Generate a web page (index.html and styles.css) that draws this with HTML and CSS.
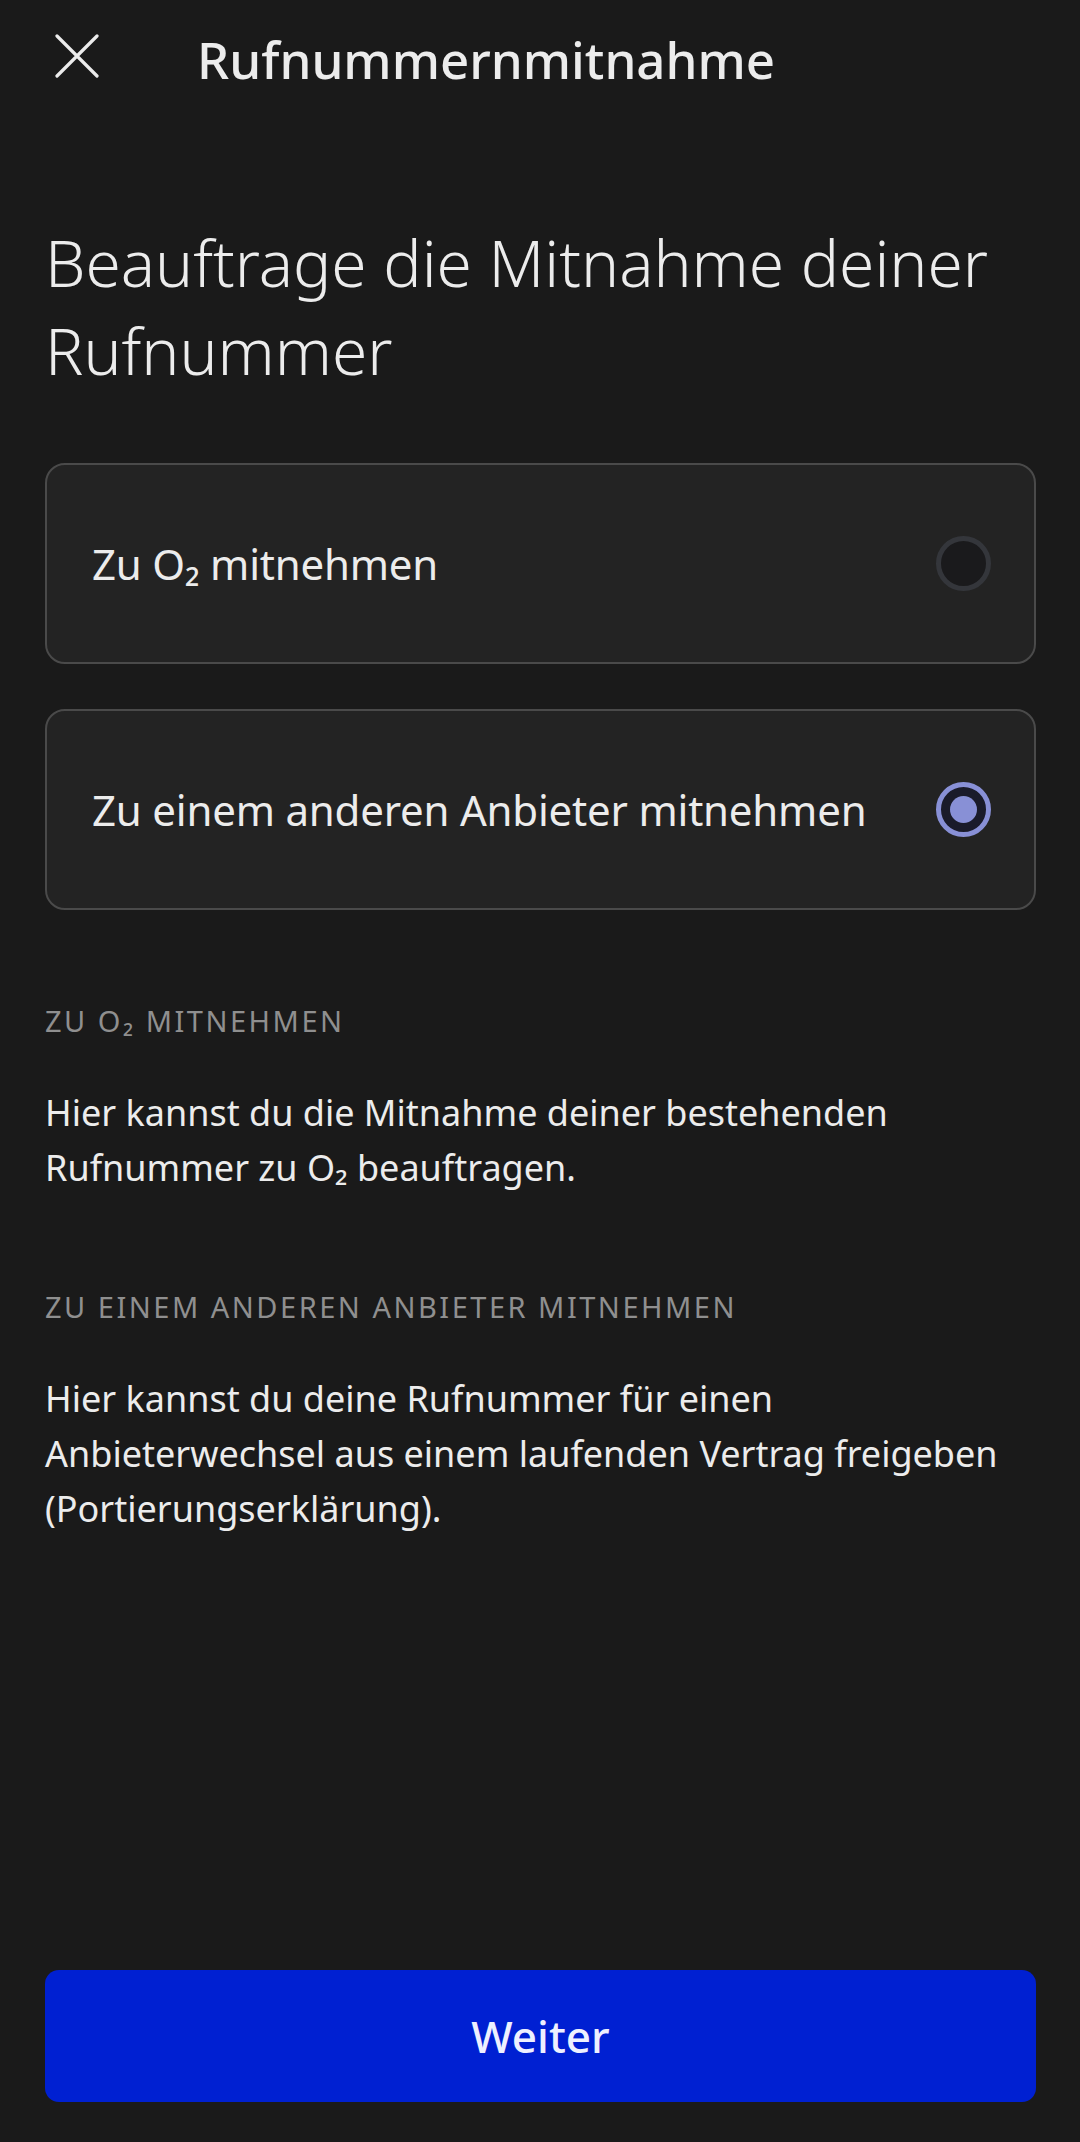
FILE: index.html
```html
<!DOCTYPE html>
<html lang="de">
<head>
  <meta charset="UTF-8">
  <meta name="viewport" content="width=device-width, initial-scale=1.0">
  <title>Rufnummernmitnahme</title>
  <link rel="stylesheet" href="styles.css">
</head>
<body>
  <div class="page">
    <header class="topbar">
      <button class="close-btn" aria-label="Schließen">
        <svg width="44" height="44" viewBox="0 0 44 44">
          <path d="M2 2 L42 42 M42 2 L2 42" stroke="#ececec" stroke-width="3.2" stroke-linecap="round" fill="none"/>
        </svg>
      </button>
      <div class="topbar-title">Rufnummernmitnahme</div>
    </header>

    <h1 class="headline">Beauftrage die Mitnahme deiner Rufnummer</h1>

    <div class="options">
      <label class="option">
        <span class="option-text">Zu O₂ mitnehmen</span>
        <span class="radio"></span>
      </label>
      <label class="option">
        <span class="option-text">Zu einem anderen Anbieter mitnehmen</span>
        <span class="radio checked"></span>
      </label>
    </div>

    <div class="info">
      <div class="info-label">Zu O₂ mitnehmen</div>
      <p class="info-text">Hier kannst du die Mitnahme deiner bestehenden Rufnummer zu O₂ beauftragen.</p>
    </div>

    <div class="info">
      <div class="info-label">Zu einem anderen Anbieter mitnehmen</div>
      <p class="info-text">Hier kannst du deine Rufnummer für einen Anbieterwechsel aus einem laufenden Vertrag freigeben (Portierungserklärung).</p>
    </div>

    <button class="primary-btn">Weiter</button>
  </div>
</body>
</html>
```

FILE: styles.css
```css
body {
  margin: 0;
  background: #1a1a1a;
  color: #ececec;
  font-family: "Noto Sans", "Open Sans", sans-serif;
}
.page {
  min-height: 100vh;
  box-sizing: border-box;
  padding: 0 44px 40px 45px;
  display: flex;
  flex-direction: column;
}
.topbar {
  display: flex;
  align-items: flex-start;
  padding-top: 23px;
}
.close-btn {
  background: none;
  border: none;
  padding: 0;
  margin: 11px 0 0 10px;
  width: 44px;
  height: 44px;
  cursor: pointer;
}
.close-btn svg {
  display: block;
}
.topbar-title {
  margin-left: 98px;
  font-size: 51px;
  line-height: 72px;
  font-weight: 500;
}
.headline {
  margin: 124px 0 0;
  font-size: 64px;
  line-height: 88px;
  font-weight: 300;
}
.options {
  margin-top: 68px;
  display: flex;
  flex-direction: column;
  gap: 45px;
}
.option {
  height: 201px;
  box-sizing: border-box;
  display: flex;
  align-items: center;
  justify-content: space-between;
  padding: 0 43px 0 45px;
  background: #232323;
  border: 2px solid #4a4a4a;
  border-radius: 20px;
  cursor: pointer;
}
.option-text {
  font-size: 42px;
  letter-spacing: -0.2px;
}
.radio {
  width: 55px;
  height: 55px;
  box-sizing: border-box;
  border-radius: 50%;
  border: 5px solid #34363b;
  background: #1a1a1c;
  display: flex;
  align-items: center;
  justify-content: center;
}
.radio.checked {
  border-color: #8890d6;
  background: #1a1b2a;
}
.radio.checked::after {
  content: "";
  width: 27px;
  height: 27px;
  border-radius: 50%;
  background: #8890d6;
}
.info {
  margin-top: 92px;
}
.info + .info {
  margin-top: 93px;
}
.info-label {
  font-size: 29px;
  line-height: 38px;
  letter-spacing: 2.5px;
  text-transform: uppercase;
  color: #8f8f8f;
}
.info-text {
  margin: 45px 0 0;
  font-size: 36px;
  line-height: 55px;
}
.primary-btn {
  margin-top: auto;
  height: 132px;
  width: 100%;
  border: none;
  border-radius: 14px;
  background: #0020d2;
  color: #eef0ff;
  font-family: inherit;
  font-size: 44px;
  font-weight: 500;
  cursor: pointer;
}
```
